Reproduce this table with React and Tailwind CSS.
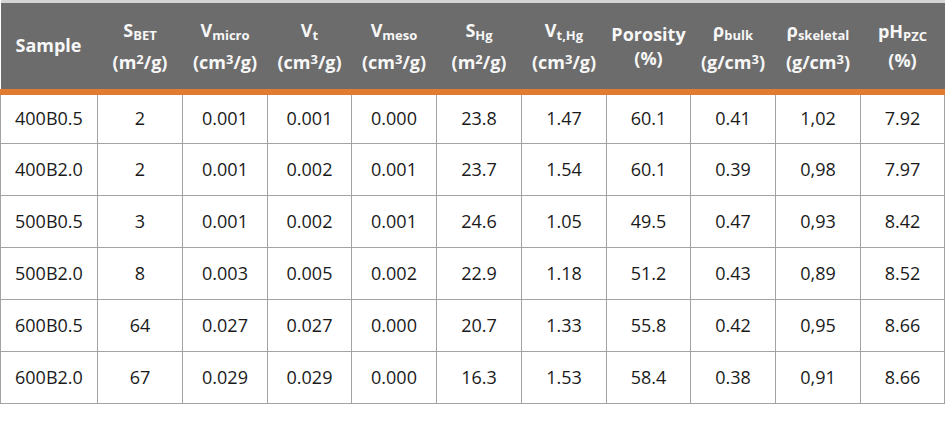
import React from "react";

const rows = [
  ["400B0.5", "2", "0.001", "0.001", "0.000", "23.8", "1.47", "60.1", "0.41", "1,02", "7.92"],
  ["400B2.0", "2", "0.001", "0.002", "0.001", "23.7", "1.54", "60.1", "0.39", "0,98", "7.97"],
  ["500B0.5", "3", "0.001", "0.002", "0.001", "24.6", "1.05", "49.5", "0.47", "0,93", "8.42"],
  ["500B2.0", "8", "0.003", "0.005", "0.002", "22.9", "1.18", "51.2", "0.43", "0,89", "8.52"],
  ["600B0.5", "64", "0.027", "0.027", "0.000", "20.7", "1.33", "55.8", "0.42", "0,95", "8.66"],
  ["600B2.0", "67", "0.029", "0.029", "0.000", "16.3", "1.53", "58.4", "0.38", "0,91", "8.66"],
];

const widths = [97, 85, 85, 84, 85, 85, 85, 84, 85, 85, 84];

function Sub({ children }) {
  return <span className="text-[13px] align-[-3px]">{children}</span>;
}

function Sup({ children }) {
  return <span className="text-[13px] align-[5px]">{children}</span>;
}

function H({ main, sub, unit }) {
  return (
    <div className="flex flex-col items-center leading-[24px]">
      <div>
        {main}
        {sub && <Sub>{sub}</Sub>}
      </div>
      <div>{unit}</div>
    </div>
  );
}

const m2 = <>(m<Sup>2</Sup>/g)</>;
const cm3g = <>(cm<Sup>3</Sup>/g)</>;
const gcm3 = <>(g/cm<Sup>3</Sup>)</>;

export default function App() {
  return (
    <div
      className="w-[945px] h-[421px] bg-white"
      style={{ fontFamily: '"Open Sans", "Liberation Sans", sans-serif' }}
    >
      <table className="table-fixed border-collapse w-[944px]">
        <colgroup>
          {widths.map((w, i) => (
            <col key={i} style={{ width: w }} />
          ))}
        </colgroup>
        <thead>
          <tr className="bg-[#6c6c6c] text-[#f7f7f7] text-[18px] font-bold border-t-[3px] border-t-[#d4d4d4] border-b-[6px] border-b-[#e07b30]">
            <th className="h-[90px] text-left pl-[15px] font-bold">Sample</th>
            <th className="font-bold"><H main="S" sub="BET" unit={m2} /></th>
            <th className="font-bold"><H main="V" sub="micro" unit={cm3g} /></th>
            <th className="font-bold"><H main="V" sub="t" unit={cm3g} /></th>
            <th className="font-bold"><H main="V" sub="meso" unit={cm3g} /></th>
            <th className="font-bold"><H main="S" sub="Hg" unit={m2} /></th>
            <th className="font-bold"><H main="V" sub="t,Hg" unit={cm3g} /></th>
            <th className="font-bold"><H main="Porosity" unit="(%)" /></th>
            <th className="font-bold"><H main="ρ" sub="bulk" unit={gcm3} /></th>
            <th className="font-bold"><H main="ρ" sub="skeletal" unit={gcm3} /></th>
            <th className="font-bold"><H main="pH" sub="PZC" unit="(%)" /></th>
          </tr>
        </thead>
        <tbody className="text-[18px] text-[#1a1a1a]">
          {rows.map((r, i) => (
            <tr key={i} className="h-[52px]">
              {r.map((c, j) => (
                <td
                  key={j}
                  className={
                    "border border-[#a3a3a3] p-0 " +
                    (j === 0 ? "text-left pl-[14px]" : "text-center")
                  }
                >
                  {c}
                </td>
              ))}
            </tr>
          ))}
        </tbody>
      </table>
    </div>
  );
}
